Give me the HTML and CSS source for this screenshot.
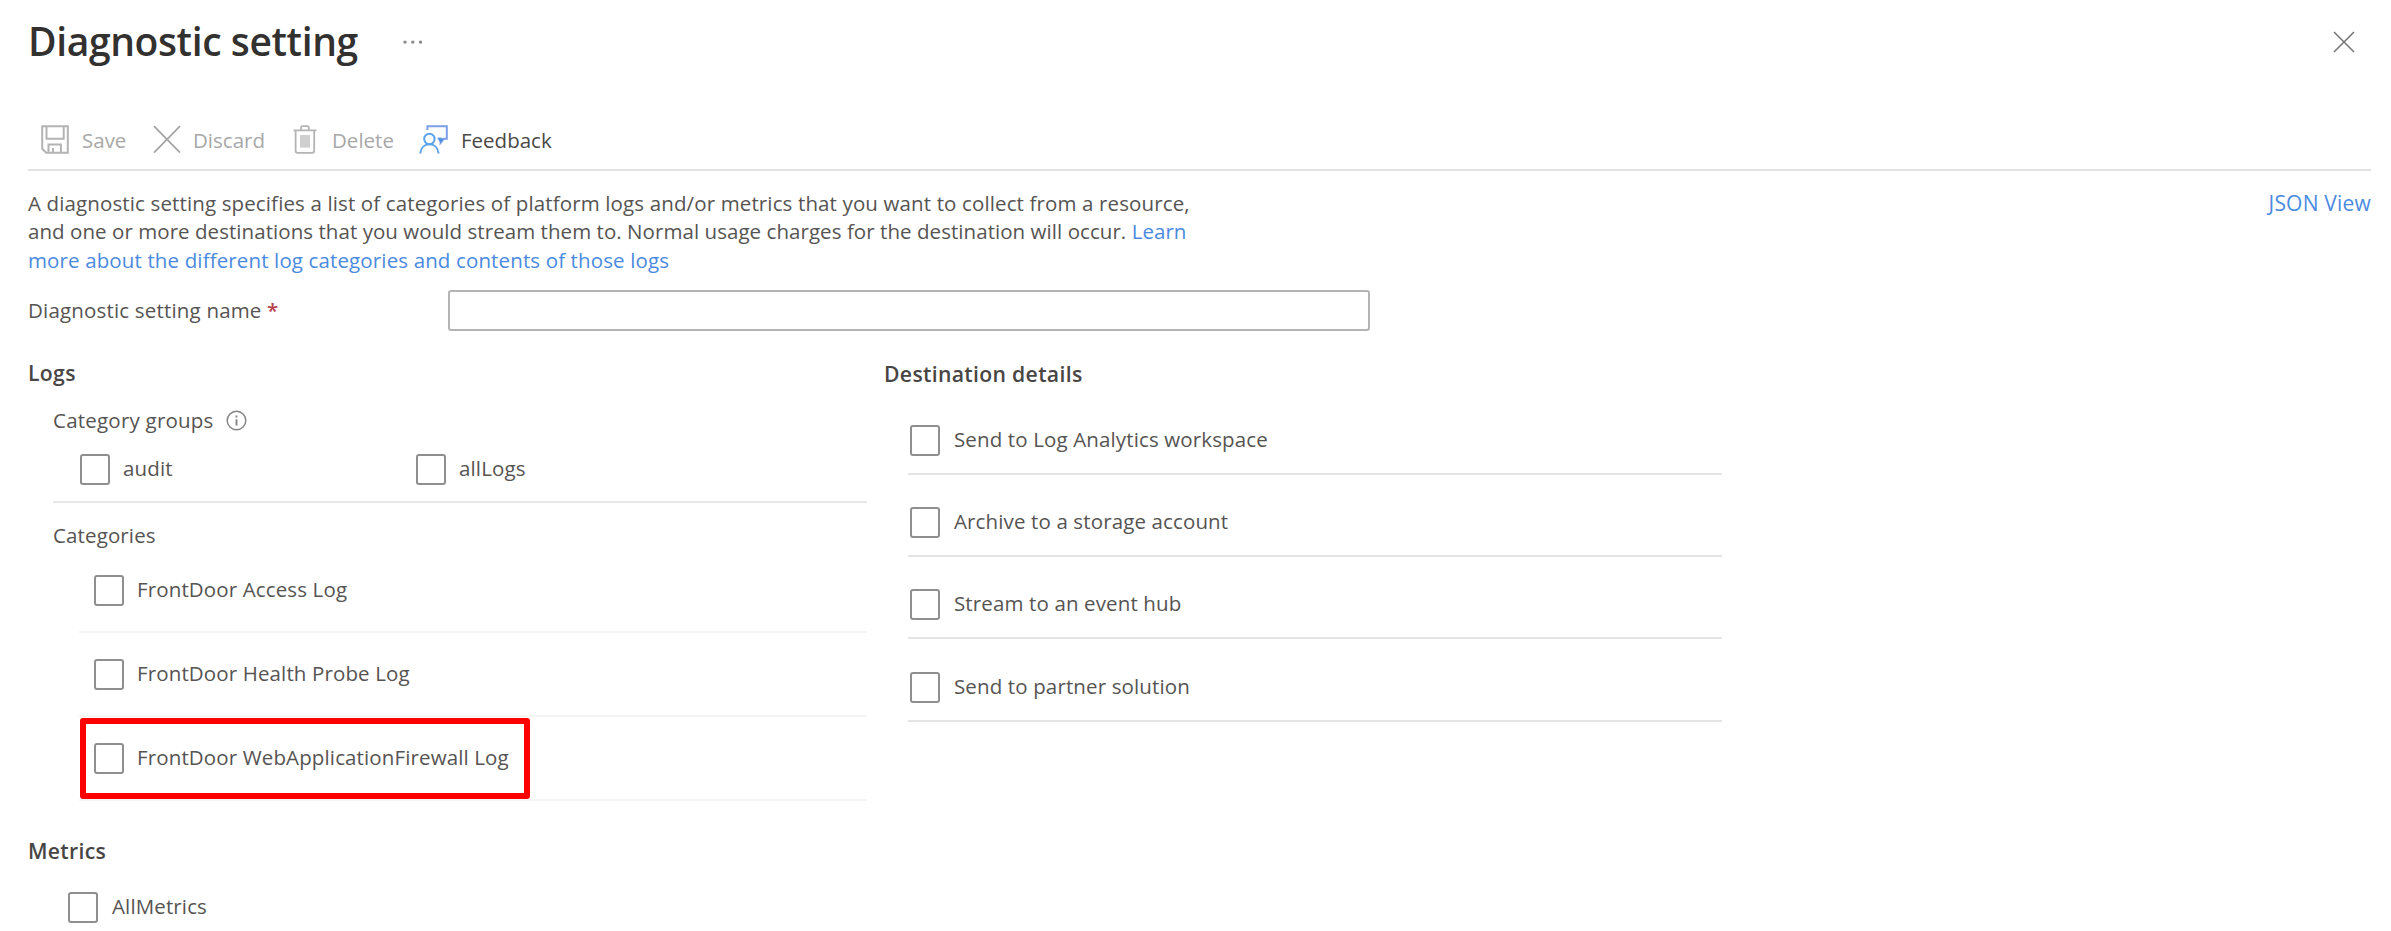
FILE: index.html
```html
<!DOCTYPE html>
<html lang="en">
<head>
<meta charset="utf-8">
<title>Diagnostic setting</title>
<link rel="stylesheet" href="styles.css">
</head>
<body>
<div class="page">
  <header class="header">
    <h1 class="title">Diagnostic setting</h1>
    <svg class="more" width="20" height="4" viewBox="0 0 20 4"><path d="M.5.8h3v2.6h-3zM8.3.8h3v2.6h-3zM16 .8h3v2.6h-3z" fill="#8a8a8a"/></svg>
    <svg class="close" width="22" height="22" viewBox="0 0 22 22"><path d="M1 1l20 20M21 1L1 21" stroke="#777" stroke-width="1.6" fill="none"/></svg>
  </header>

  <nav class="toolbar">
    <span class="tool save"><svg width="28" height="29" viewBox="0 0 28 29" fill="none" stroke="#b4b4b4" stroke-width="2"><path d="M1.2 1.2h25.6v26.600H5.200l-4-4zM5.500 1.200v12.600h17.200V1.200M7.500 27.800v-8.200h12.400v8.200M12 27.500v-4.600"/></svg>Save</span>
    <span class="tool discard"><svg width="28" height="29" viewBox="0 0 28 29" fill="none" stroke="#a6a6a6" stroke-width="1.8"><path d="M1 1.2l26 26.4M27 1.2L1 27.6"/></svg>Discard</span>
    <span class="tool delete"><svg width="24" height="29" viewBox="0 0 24 29" fill="none" stroke="#b4b4b4" stroke-width="1.8"><path d="M.5 5.4h23M8 5V2.600Q8 1.200 9.400 1.200h5q1.400 0 1.400 1.400V5M2.600 5.800v20q0 2 2 2h14.600q2 0 2-2v-20"/><path d="M7 10h10v12.600H7z" fill="#cfcfcf" stroke="none"/></svg>Delete</span>
    <span class="tool feedback"><svg width="29" height="29" viewBox="0 0 29 29" fill="none" stroke-width="2"><path d="M8.400 5V1.200h19.400v12.600h-3.200l-3 4v-4.200h-3" stroke="#7d9fe6"/><path d="M18.800 13.400h6l-3.200 4.600z" fill="#4a90e2"/><circle cx="10.400" cy="14" r="5.200" stroke="#5ba3ea"/><path d="M1.200 28.500c.6-5.400 4-9.200 9.200-9.200s8.600 3.800 9.200 9.200" stroke="#5ba3ea"/></svg>Feedback</span>
  </nav>

  <section class="intro">
    <p class="description">A diagnostic setting specifies a list of categories of platform logs and/or metrics that you want to collect from a resource,<br><span class="tight">and one or more destinations that you would stream them to. Normal usage charges for the destination will occur. <a class="link">Learn</a></span><br><a class="link">more about the different log categories and contents of those logs</a></p>
    <a class="link json">JSON View</a>
  </section>

  <label class="name-row">
    <span class="name-label">Diagnostic setting name <span class="required">*</span></span>
    <input class="name-input" type="text">
  </label>

  <main class="columns">
    <section class="left">
      <h2 class="heading">Logs</h2>
      <div class="groups">
        <div class="group-title">Category groups
          <svg width="21" height="21" viewBox="0 0 21 21" fill="none" stroke="#858585"><circle cx="10.5" cy="10.5" r="9.3" stroke-width="1.5"/><path d="M10.5 9.200v6.300M10.500 5.600v2" stroke-width="1.900"/></svg>
        </div>
        <div class="group-options">
          <label class="option"><span class="box"></span>audit</label>
          <label class="option"><span class="box"></span>allLogs</label>
        </div>
      </div>
      <div class="categories">
        <div class="category-title">Categories</div>
        <div class="category"><label class="option"><span class="box"></span>FrontDoor Access Log</label></div>
        <div class="category"><label class="option"><span class="box"></span>FrontDoor Health Probe Log</label></div>
        <div class="category"><label class="option"><span class="box"></span>FrontDoor WebApplicationFirewall Log</label><span class="highlight"></span></div>
      </div>
      <h2 class="heading metrics">Metrics</h2>
      <label class="option all-metrics"><span class="box"></span>AllMetrics</label>
    </section>

    <section class="right">
      <h2 class="heading">Destination details</h2>
      <div class="destinations">
        <div class="destination"><label class="option"><span class="box"></span>Send to Log Analytics workspace</label></div>
        <div class="destination"><label class="option"><span class="box"></span>Archive to a storage account</label></div>
        <div class="destination"><label class="option"><span class="box"></span>Stream to an event hub</label></div>
        <div class="destination"><label class="option"><span class="box"></span>Send to partner solution</label></div>
      </div>
    </section>
  </main>
</div>
</body>
</html>
```
FILE: styles.css
```css
* { box-sizing: border-box; }

body {
  margin: 0;
  background: #fff;
  color: #565452;
  font: 400 20.5px/28px "Open Sans", "Noto Sans", sans-serif;
  letter-spacing: 0.13px;
  overflow: hidden;
}

.page { height: 931px; padding: 0 20px 0 28px; overflow: hidden; }

.header { display: flex; align-items: center; height: 83px; }
.title {
  margin: 0;
  color: #323130;
  font-size: 39px;
  font-weight: 600;
  line-height: 56px;
  letter-spacing: -0.38px;
  width: 375px;
  padding-bottom: 2px;
}
.close { margin: 0 16px 0 auto; }

.toolbar {
  display: flex;
  height: 88px;
  padding: 42px 0 0 13px;
  border-bottom: 2px solid #e3e3e3;
}
.tool {
  display: flex;
  align-items: flex-start;
  gap: 13px;
  height: 30px;
  color: #a8a8a8;
  line-height: 31px;
  letter-spacing: 0;
}
.tool svg { flex: none; }
.save { width: 112px; }
.discard { width: 140px; gap: 12px; }
.delete { width: 126px; gap: 15px; }
.feedback { color: #4a4846; }

.intro { display: flex; justify-content: space-between; padding-top: 17.5px; }
.description { margin: 0; line-height: 28.5px; white-space: nowrap; }
.tight { letter-spacing: 0.055px; }
.link { color: #4a8ae0; }
.json { font-size: 21px; letter-spacing: 0.2px; }

.name-row { display: flex; align-items: center; margin-top: 15px; height: 42px; }
.name-label { width: 420px; letter-spacing: 0.18px; }
.required { color: #b8404a; font-weight: 600; }
.name-input {
  width: 922px;
  height: 41px;
  border: 2px solid #b4b4b4;
  border-radius: 3px;
  background: #fff;
}

.columns { display: flex; margin-top: 28px; }
.left { width: 839px; margin-right: 17px; }
.heading {
  margin: 0;
  color: #484644;
  font-size: 21.2px;
  font-weight: 600;
  line-height: 28px;
  letter-spacing: 0.32px;
}

.groups {
  margin: 19px 0 0 25px;
  height: 97px;
  border-bottom: 2px solid #e6e6e6;
}
.group-title { display: flex; align-items: center; gap: 12px; letter-spacing: 0.22px; }
.group-options { display: flex; padding: 20px 0 0 27px; }
.group-options .option { width: 336px; }

.option { display: flex; align-items: flex-start; gap: 13px; height: 31px; }
.box {
  flex: none;
  width: 30px;
  height: 31px;
  border: 2px solid #8f8f8f;
  border-radius: 3px;
  background: #fff;
}

.categories { padding: 18px 0 0 25px; }
.category {
  position: relative;
  height: 84px;
  margin-left: 26px;
  padding: 26px 0 0 15px;
  border-bottom: 2px solid #f5f5f5;
}
.highlight {
  position: absolute;
  left: 1px;
  top: 1px;
  width: 450px;
  height: 81px;
  border: 6px solid #f00;
  border-radius: 3px;
}

.metrics { margin-top: 36px; }
.all-metrics { margin: 27px 0 0 40px; gap: 14px; }

.right { width: 838px; padding-top: 1px; }
.destinations { padding: 37px 0 0 24px; }
.destination {
  height: 82.2px;
  padding-left: 2px;
}
.destination .option { gap: 14px; }
.destination::after {
  content: "";
  display: block;
  height: 2px;
  margin: 17px 0 0 -2px;
  background: #e4e4e4;
}
```
